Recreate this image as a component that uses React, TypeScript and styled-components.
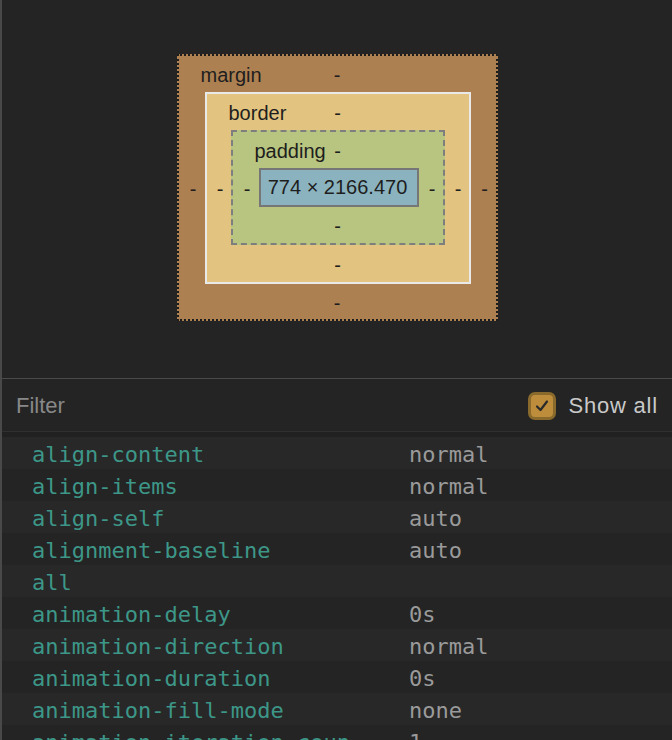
import React from 'react';
import styled, { createGlobalStyle } from 'styled-components';

const GlobalStyle = createGlobalStyle`
  html, body {
    margin: 0;
    padding: 0;
    background: #242424;
  }
  body {
    width: 672px;
    height: 740px;
    overflow: hidden;
  }
`;

const Pane = styled.div`
  width: 672px;
  height: 740px;
  box-sizing: border-box;
  border-left: 2px solid #494949;
  background: #242424;
  display: flex;
  flex-direction: column;
  overflow: hidden;
`;

const Metrics = styled.section`
  flex: 0 0 379px;
  box-sizing: border-box;
  padding-top: 54px;
  display: flex;
  justify-content: center;
  align-items: flex-start;
  border-bottom: 1px solid #4a4a4a;
`;

const Layer = styled.div<{ $bg: string; $border: string; $cols: string; $rows: string }>`
  display: grid;
  grid-template-columns: ${p => p.$cols};
  grid-template-rows: ${p => p.$rows};
  background: ${p => p.$bg};
  border: ${p => p.$border};
  font-family: 'Liberation Sans', Arial, sans-serif;
  font-size: 20px;
  color: #1e1e1e;
`;

const EdgeRow = styled.div`
  grid-column: 1 / -1;
  display: grid;
  grid-template-columns: minmax(0, 1fr) auto minmax(0, 1fr);
  align-items: center;
  padding-top: 2px;
`;

const LayerLabel = styled.span`
  justify-self: start;
  padding-left: 22px;
  white-space: nowrap;
`;

const Dash = styled.span`
  display: flex;
  align-items: center;
  justify-content: center;
  line-height: 1;
`;

const SideDash = styled(Dash)`
  padding: 2px 0 0 3px;
`;

const Content = styled.div`
  box-sizing: border-box;
  width: 160px;
  height: 39px;
  border: 2px solid #767676;
  background: #8bb3bf;
  display: flex;
  align-items: center;
  justify-content: center;
  padding-right: 2px;
  white-space: nowrap;
`;

const FilterBar = styled.div`
  flex: 0 0 53px;
  box-sizing: border-box;
  display: flex;
  align-items: center;
  justify-content: space-between;
  padding: 2px 14px 0;
  border-bottom: 1px solid #303030;
  font-family: 'Liberation Sans', Arial, sans-serif;
`;

const FilterText = styled.span`
  font-size: 22px;
  color: #888888;
`;

const ShowAll = styled.label`
  display: flex;
  align-items: center;
  gap: 12px;
  font-size: 22px;
  letter-spacing: 0.8px;
  color: #c9c9c9;
`;

const Check = styled.span`
  box-sizing: border-box;
  width: 28px;
  height: 28px;
  border-radius: 7px;
  border: 3px solid #8a6a2c;
  background: #bd8d3c;
  display: flex;
  align-items: center;
  justify-content: center;
`;

const PropertyList = styled.div`
  flex: 1;
  padding-top: 5px;
  background: #212121;
`;

const PropRow = styled.div<{ $odd: boolean }>`
  height: 32px;
  box-sizing: border-box;
  padding-top: 2px;
  display: grid;
  grid-template-columns: 377px 1fr;
  align-items: center;
  padding-left: 30px;
  background: ${p => (p.$odd ? '#282828' : '#242424')};
  font-family: 'DejaVu Sans Mono', 'Liberation Mono', monospace;
  font-size: 22px;
  white-space: nowrap;
`;

const PropName = styled.span`
  color: #3d9788;
  max-width: 317px;
  overflow: hidden;
`;

const PropValue = styled.span`
  color: #9a9a9a;
`;

const properties: [string, string][] = [
  ['align-content', 'normal'],
  ['align-items', 'normal'],
  ['align-self', 'auto'],
  ['alignment-baseline', 'auto'],
  ['all', ''],
  ['animation-delay', '0s'],
  ['animation-direction', 'normal'],
  ['animation-duration', '0s'],
  ['animation-fill-mode', 'none'],
  ['animation-iteration-count', '1'],
];

const Side = () => <SideDash>-</SideDash>;

export default function App() {
  return (
    <>
      <GlobalStyle />
      <Pane>
        <Metrics>
          <Layer $bg="#ad8052" $border="2px dotted #1c1c1c" $cols="26px 266px 25px" $rows="36px 192px 35px">
            <EdgeRow>
              <LayerLabel>margin</LayerLabel>
              <Dash>-</Dash>
              <span />
            </EdgeRow>
            <Side />
            <Layer $bg="#e2c480" $border="2px solid #e9e9e9" $cols="24px 214px 24px" $rows="36px 115px 37px">
              <EdgeRow>
                <LayerLabel>border</LayerLabel>
                <Dash>-</Dash>
                <span />
              </EdgeRow>
              <Side />
              <Layer $bg="#b8c580" $border="2px dashed #7e7e7e" $cols="26px 160px 24px" $rows="36px 39px 36px">
                <EdgeRow>
                  <LayerLabel>padding</LayerLabel>
                  <Dash>-</Dash>
                  <span />
                </EdgeRow>
                <Side />
                <Content>774 × 2166.470</Content>
                <Side />
                <EdgeRow>
                  <span />
                  <Dash>-</Dash>
                  <span />
                </EdgeRow>
              </Layer>
              <Side />
              <EdgeRow>
                <span />
                <Dash>-</Dash>
                <span />
              </EdgeRow>
            </Layer>
            <Side />
            <EdgeRow>
              <span />
              <Dash>-</Dash>
              <span />
            </EdgeRow>
          </Layer>
        </Metrics>
        <FilterBar>
          <FilterText>Filter</FilterText>
          <ShowAll>
            <Check>
              <svg width="16" height="16" viewBox="0 0 16 16" fill="none">
                <path d="M3 8.5 L6.5 12 L13 3.5" stroke="#2a2a2a" strokeWidth="2.2" strokeLinecap="round" strokeLinejoin="round" />
              </svg>
            </Check>
            Show all
          </ShowAll>
        </FilterBar>
        <PropertyList>
          {properties.map(([name, value], i) => (
            <PropRow key={name} $odd={i % 2 === 0}>
              <PropName>{name}</PropName>
              <PropValue>{value}</PropValue>
            </PropRow>
          ))}
        </PropertyList>
      </Pane>
    </>
  );
}
